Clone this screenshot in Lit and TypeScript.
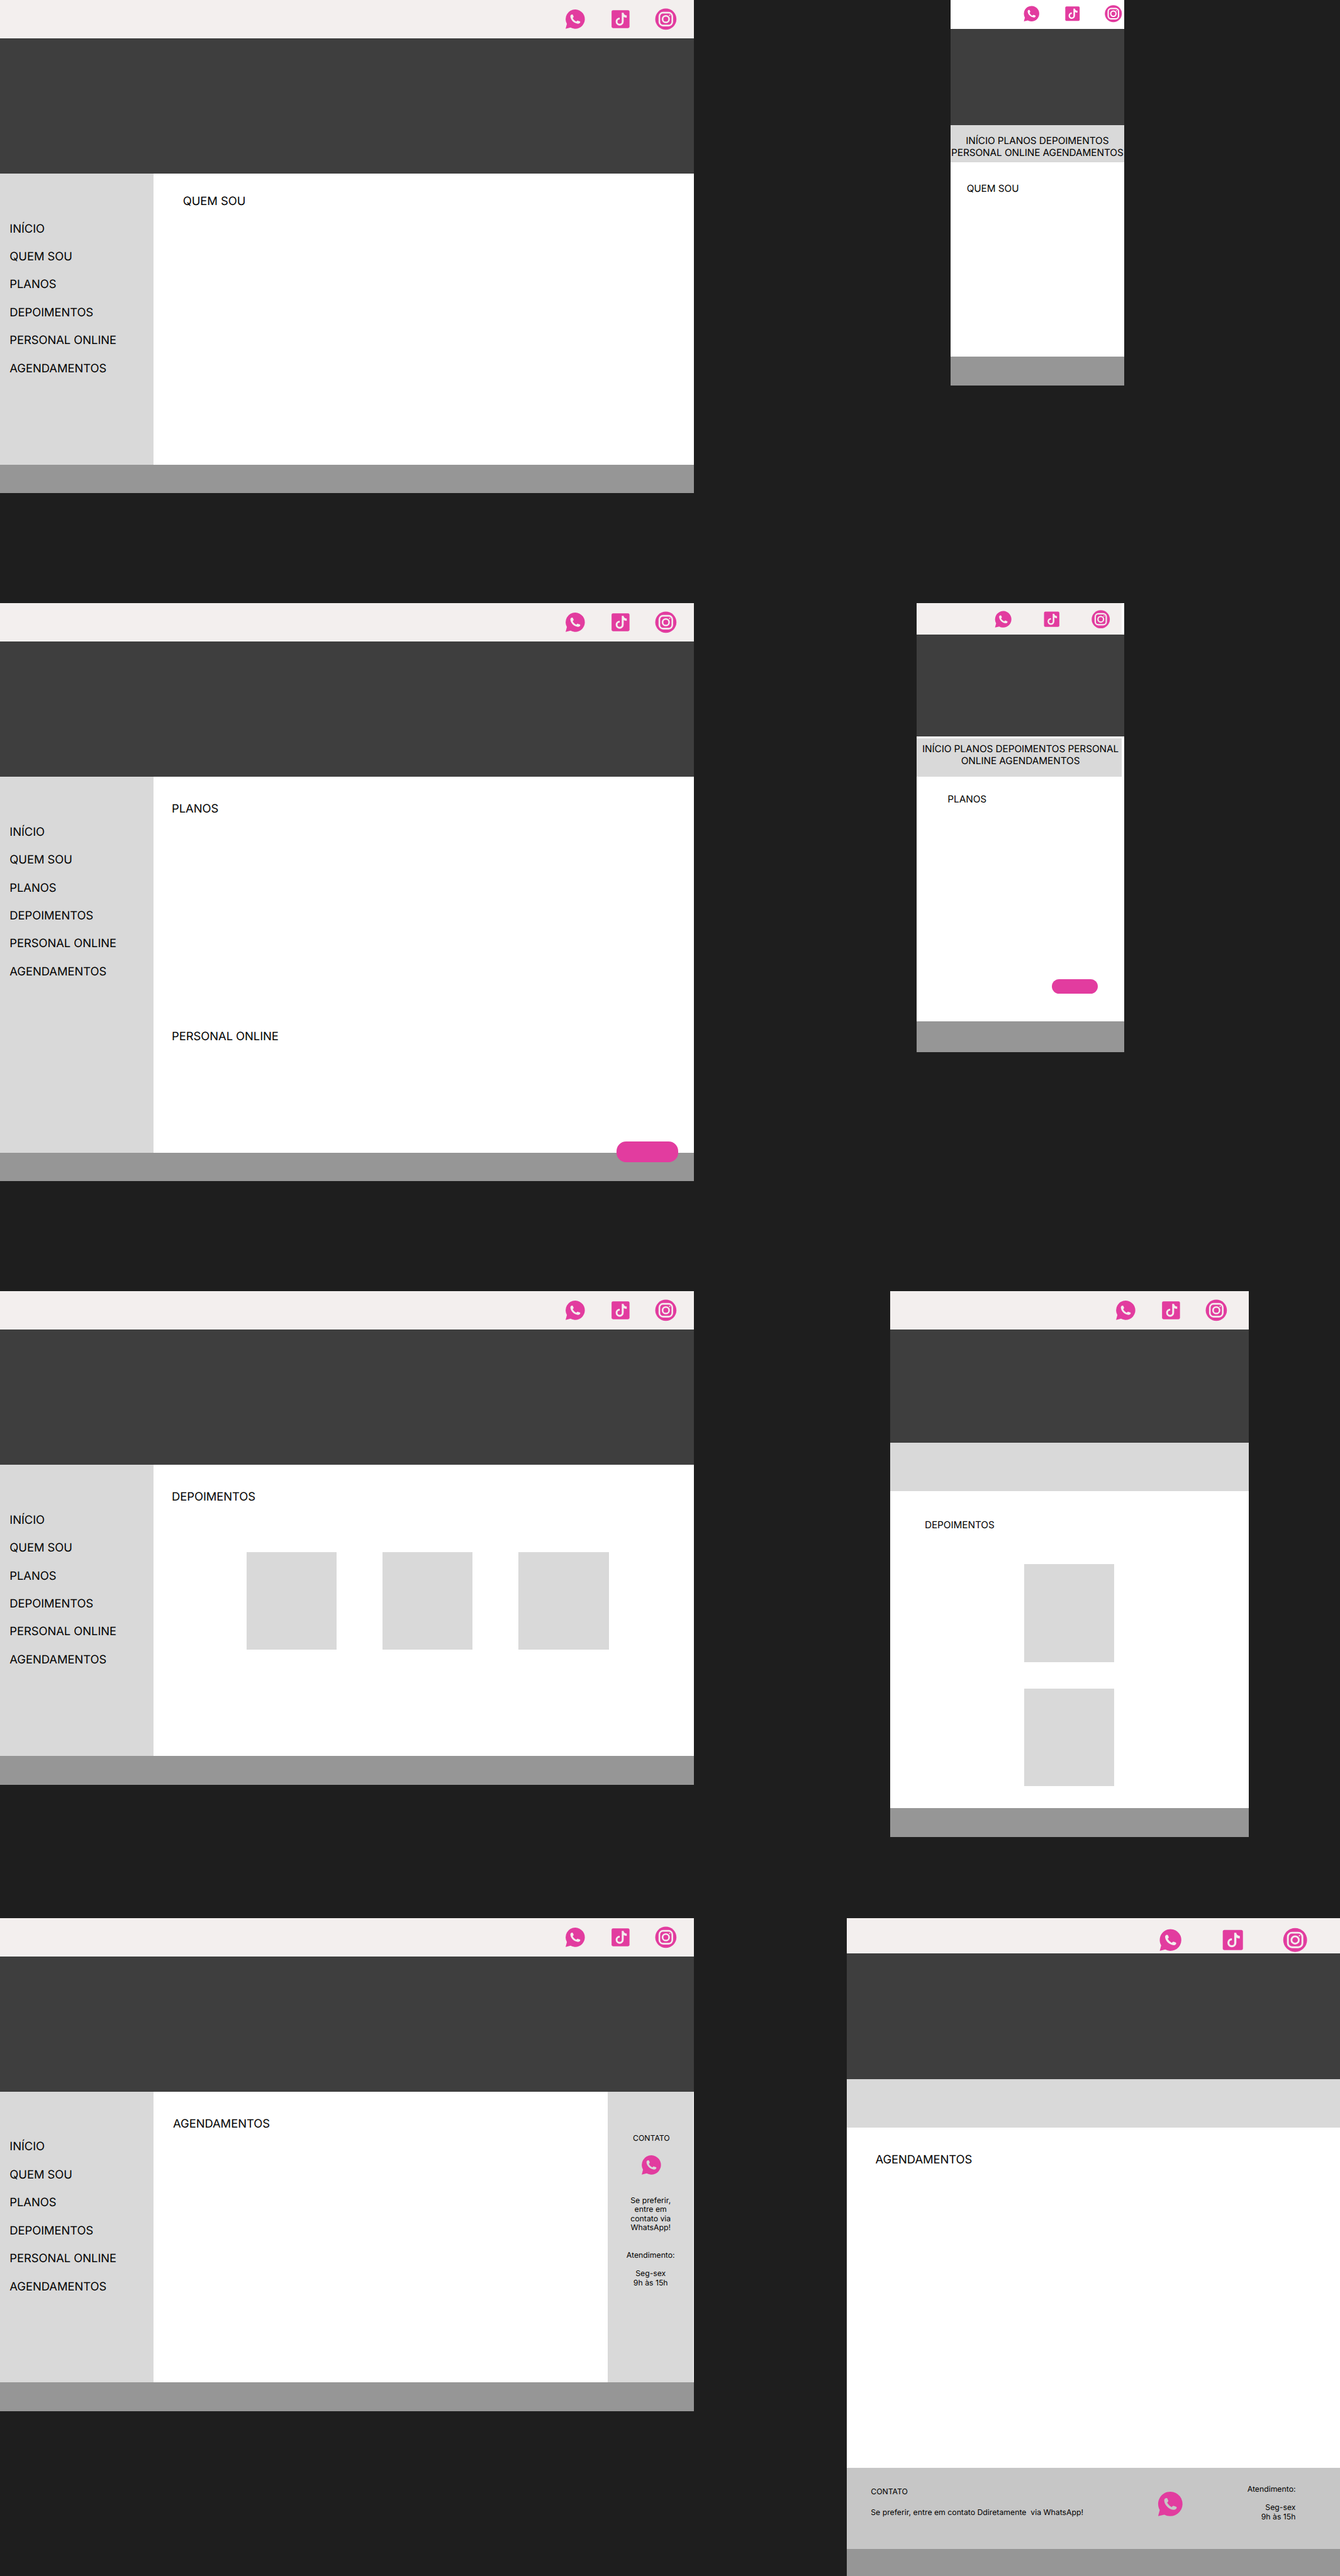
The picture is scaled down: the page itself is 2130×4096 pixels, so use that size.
import { LitElement, html, css, svg, nothing } from "lit";
import { customElement, property } from "lit/decorators.js";

const MENU = ["INÍCIO", "QUEM SOU", "PLANOS", "DEPOIMENTOS", "PERSONAL ONLINE", "AGENDAMENTOS"];

const whatsapp = svg`<path fill="currentColor" d="M12 2a10 10 0 1 1-4.9 18.75L2 22l1.35-5A10 10 0 0 1 12 2z"/>
<path fill="var(--cut, var(--bar))" d="M8.75 7.2C9.1 7.15 9.45 7.3 9.6 7.65L10.25 9.2C10.4 9.6 10.3 9.95 10 10.25L9.35 10.9C10.15 12.4 11.4 13.7 13.1 14.6L13.75 13.9C14 13.6 14.4 13.5 14.8 13.65L16.55 14.25C17 14.4 17.25 14.75 17.2 15.2C17.05 16.2 16 16.85 14.9 16.85C10.9 16.6 7.2 13 6.95 9.2C6.95 8.1 7.6 7.3 8.75 7.2Z"/>`;

const tiktok = svg`<rect x="2.7" y="2.7" width="18.6" height="18.6" rx="1.6" fill="currentColor"/>
<path fill="var(--bar)" d="M13.26 5.4V14.6A2.22 2.22 0 1 1 11.15 12.4V10.45A4.15 4.15 0 1 0 15.25 14.6V9.7C16.2 10.35 17.3 10.65 18.44 10.65V8.2C16.6 8.15 15.25 7 15.2 5.4Z"/>`;

const instagram = svg`<circle cx="12" cy="12" r="11" fill="currentColor"/>
<rect x="5.3" y="5.3" width="13.4" height="13.4" rx="3.8" fill="none" stroke="var(--bar)" stroke-width="1.7"/>
<circle cx="12" cy="12" r="3.4" fill="none" stroke="var(--bar)" stroke-width="1.65"/>
<circle cx="16" cy="8" r="0.65" fill="var(--bar)"/>`;

const ICONS = { whatsapp, tiktok, instagram };

@customElement("brand-icon")
class BrandIcon extends LitElement {
  @property() name: keyof typeof ICONS = "whatsapp";
  static styles = css`
    :host { display: block; flex: none; width: var(--icon, 48px); height: var(--icon, 48px); color: #e23c9f; }
    .glyph { display: block; width: 100%; height: 100%; overflow: visible; }
  `;
  render() {
    return html`<svg class="glyph" viewBox="0 0 24 24">${ICONS[this.name]}</svg>`;
  }
}

@customElement("social-bar")
class SocialBar extends LitElement {
  static styles = css`
    :host { display: flex; justify-content: flex-end; align-items: center; box-sizing: border-box; flex: none; background: var(--bar); }
  `;
  render() {
    return html`<brand-icon name="whatsapp"></brand-icon><brand-icon name="tiktok"></brand-icon><brand-icon name="instagram"></brand-icon>`;
  }
}

@customElement("app-root")
class AppRoot extends LitElement {
  static styles = css`
    :host { display: block; width: 2130px; height: 4096px; overflow: hidden; background: #1e1e1e; }
    .canvas {
      zoom: 0.7661; display: flex; justify-content: space-between; width: 2780.3px; height: 5347px;
      --bar: #f3efee; font: 400 24px/29px Inter, "Liberation Sans", sans-serif; color: #000;
      text-rendering: geometricPrecision; letter-spacing: -0.08px;
    }
    .column { display: flex; flex-direction: column; }
    .column.wide { width: 1440px; }
    .column.narrow { width: 1024px; }
    .frame { display: flex; flex-direction: column; flex: none; background: #fff; position: relative; }
    .hero { background: #3e3e3e; flex: none; }
    .foot { background: #969696; height: 60px; flex: none; }

    .desktop { height: 1024px; }
    .desktop .hero { height: 280px; }
    .desktop social-bar { height: 80px; padding: 0 34px 0.5px 0; gap: 46.5px; }
    .desktop.d1 { margin-bottom: 228px; }
    .desktop.d2 { height: 1200px; margin-bottom: 228px; }
    .desktop.d3 { margin-bottom: 277px; }
    .body { display: flex; flex: 1; min-height: 0; }
    .side { width: 318px; box-sizing: border-box; padding: 100.3px 0 0 20px; background: #d9d9d9; display: flex; flex-direction: column; gap: 29px; flex: none; }
    .main { flex: 1; padding: 52.2px 0 0 38.5px; }
    .d1 .main { padding: 43.3px 0 0 61.5px; }
    .d4 .main { padding-left: 41px; }
    .second { margin-top: 443px; }
    .cards { display: flex; gap: 95px; margin: 99.8px 0 0 155.5px; }
    .card { width: 187px; height: 203px; background: #d9d9d9; }
    .cta { position: absolute; background: #e23c9f; border-radius: 20px; }
    .d2 .cta { right: 33px; bottom: 39.5px; width: 128px; height: 43px; }
    .m2 .cta { right: 55px; bottom: 122px; width: 95px; height: 30px; border-radius: 15px; }
    .contact { --cut: #d9d9d9; width: 178px; margin-right: 1px; background: #d9d9d9; font-size: 16px; line-height: 19px; letter-spacing: 0; text-align: center; display: flex; flex-direction: column; align-items: center; flex: none; }
    .contact .label { margin: 88px 0 21px 3px; }
    .contact brand-icon { margin-left: 4px; }
    .contact .note { margin-top: 41px; }
    .contact .hours { margin-top: 38px; }
    .line { display: block; white-space: pre; }
    .gap { margin-bottom: 19px; }

    .mobile { font-size: 20px; line-height: 24px; }
    .strip { background: #d9d9d9; text-align: center; flex: none; box-sizing: border-box; }
    .mobile .main { padding: 0; }
    .m1 { width: 360px; height: 800px; margin: 0 0 452px 216px; --bar: #fff; --icon: 38.5px; }
    .m1 social-bar { height: 60px; padding: 0 3.5px 2px 0; gap: 46px; }
    .m1 .hero { height: 200px; }
    .m1 .strip { height: 77px; padding-top: 21px; }
    .m1 .title { margin: 42.5px 0 0 33.5px; }
    .m2 { width: 430px; height: 932px; margin: 0 0 496px 146px; --icon: 41px; }
    .m2 social-bar { width: 425px; height: 65px; padding: 1px 23.5px 0 0; gap: 60px; }
    .m2 .hero { height: 212px; margin-bottom: 3px; }
    .m2 .strip { width: 425px; height: 80px; padding-top: 11.5px; }
    .m2 .strip .line { margin-right: -5px; }
    .m2 .foot { height: 64px; }
    .m2 .title { margin: 35px 0 0 64px; }
    .m3 { width: 744px; height: 1133px; margin: 0 0 168px 91px; }
    .m3 social-bar { height: 80px; padding-right: 43px; gap: 46.5px; }
    .m3 .hero { height: 235px; }
    .m3 .strip { height: 100px; }
    .m3 .title { margin: 58.5px 0 69.5px 71.5px; }
    .m3 .card { margin: 0 0 54.5px 278px; }
    .m4 { width: 1024px; height: 1366px; --icon: 54px; font-size: 24px; line-height: 29px; }
    .m4 social-bar { height: 73px; padding: 17px 66px 0 0; gap: 75.5px; }
    .m4 .hero { height: 262px; }
    .m4 .strip { height: 100px; }
    .m4 .title { margin: 51.5px 0 0 60px; }
    .m4 .foot { height: 56px; }
    .band { display: flex; height: 169px; flex: none; background: #c6c6c6; font-size: 16px; line-height: 19px; letter-spacing: 0; --icon: 61px; --cut: #c6c6c6; }
    .band .text { width: 445px; padding: 40.5px 0 0 50.5px; }
    .band .label { margin-bottom: 24px; }
    .band brand-icon { margin: 45px 0 0 146.5px; }
    .band .hours { flex: 1; padding: 35.5px 92px 0 0; text-align: right; }
  `;

  private side() {
    return html`<nav class="side">${MENU.map((m) => html`<span class="line">${m}</span>`)}</nav>`;
  }

  private desktop(cls: string, main: unknown, extra: unknown = nothing, over: unknown = nothing) {
    return html`<section class="frame desktop ${cls}">
      <social-bar></social-bar>
      <div class="hero"></div>
      <div class="body">${this.side()}<div class="main">${main}</div>${extra}</div>
      <div class="foot"></div>
      ${over}
    </section>`;
  }

  private mobile(cls: string, nav: string[], main: unknown, extra: unknown = nothing) {
    return html`<section class="frame mobile ${cls}">
      <social-bar></social-bar>
      <div class="hero"></div>
      <div class="strip">${nav.map((l) => html`<span class="line">${l}</span>`)}</div>
      <div class="body"><div class="main">${main}</div></div>
      ${extra}
      <div class="foot"></div>
    </section>`;
  }

  private hours() {
    return html`<div class="hours"><span class="line gap">Atendimento:</span><span class="line">Seg-sex</span><span class="line">9h às 15h</span></div>`;
  }

  render() {
    const title = (t: string) => html`<div class="line title">${t}</div>`;
    const card = html`<div class="card"></div>`;
    const cta = html`<div class="cta"></div>`;
    return html`<main class="canvas">
      <div class="column wide">
        ${this.desktop("d1", title("QUEM SOU"))}
        ${this.desktop("d2", html`${title("PLANOS")}<div class="line second">PERSONAL ONLINE</div>`, nothing, cta)}
        ${this.desktop("d3", html`${title("DEPOIMENTOS")}<div class="cards">${card}${card}${card}</div>`)}
        ${this.desktop("d4", title("AGENDAMENTOS"), html`<aside class="contact">
          <span class="label">CONTATO</span>
          <brand-icon name="whatsapp"></brand-icon>
          <div class="note">${["Se preferir,", "entre em", "contato via", "WhatsApp!"].map((l) => html`<span class="line">${l}</span>`)}</div>
          ${this.hours()}
        </aside>`)}
      </div>
      <div class="column narrow">
        ${this.mobile("m1", ["INÍCIO PLANOS DEPOIMENTOS", "PERSONAL ONLINE AGENDAMENTOS"], title("QUEM SOU"))}
        ${this.mobile("m2", ["INÍCIO PLANOS DEPOIMENTOS PERSONAL", "ONLINE AGENDAMENTOS"], title("PLANOS"), cta)}
        ${this.mobile("m3", [], html`${title("DEPOIMENTOS")}${card}${card}`)}
        ${this.mobile("m4", [], title("AGENDAMENTOS"), html`<div class="band">
          <div class="text"><div class="line label">CONTATO</div><div class="line">Se preferir, entre em contato Ddiretamente  via WhatsApp!</div></div>
          <brand-icon name="whatsapp"></brand-icon>
          ${this.hours()}
        </div>`)}
      </div>
    </main>`;
  }
}
